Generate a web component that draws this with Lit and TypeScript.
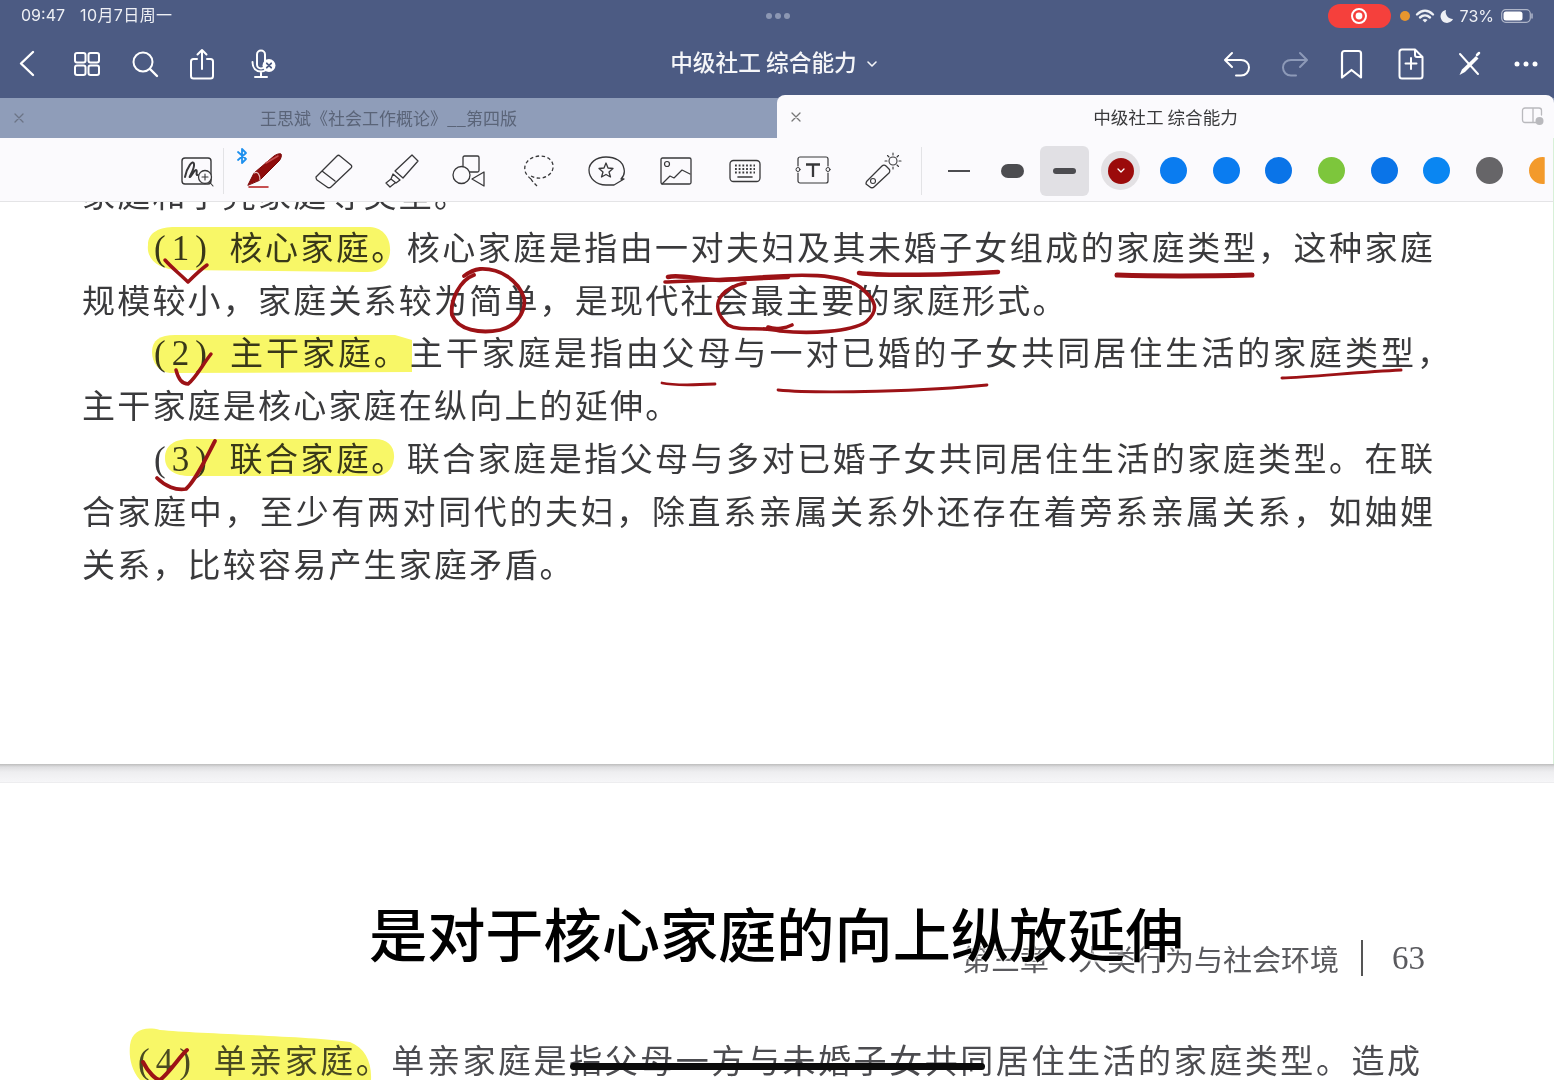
import { LitElement, html, css, svg } from "lit";
import { customElement } from "lit/decorators.js";

const ic = (w: number, h: number, body: unknown) => html`<svg width=${w} height=${h} viewBox="0 0 ${w} ${h}" fill="none" stroke="currentColor" stroke-linecap="round" stroke-linejoin="round">${body}</svg>`;

const colors = ["#0a7cf0", "#0a7cf0", "#0a74e8", "#7dc63c", "#0a74e8", "#0a86f2", "#666568"];

@customElement("app-root")
export class AppRoot extends LitElement {
  static styles = css`
    :host { display: block; width: 1554px; height: 1080px; position: relative; overflow: hidden; background: #fff;
      font-family: "Noto Sans CJK SC", "Noto Sans", sans-serif; color: #333; }
    .app { height: 1080px; display: flex; flex-direction: column; }
    .head { height: 98px; flex: none; background: #4c5b83; color: #fff; display: flex; flex-direction: column; }
    .status { height: 32px; display: grid; grid-template-columns: 1fr auto 1fr; align-items: center; padding: 0 20px 0 21px; font-family: "Inter", "Noto Sans CJK SC", sans-serif; font-size: 16px; line-height: 20px; color: #eef0f5; }
    .status .l { display: flex; gap: 14px; align-items: baseline; margin-top: -2px; }
    .status .l span + span { letter-spacing: .4px; margin-left: 1px; }
    .dots { display: flex; gap: 3px; }
    .dots i { width: 6px; height: 6px; border-radius: 50%; background: #8c97b3; }
    .status .r { display: flex; justify-content: flex-end; align-items: center; }
    .rec { width: 63px; height: 24px; border-radius: 12px; background: #f5403c; display: flex; align-items: center; justify-content: center; margin-right: 9px; }
    .odot { width: 10px; height: 10px; border-radius: 50%; background: #e8962e; margin-right: 5px; }
    .moon { display: flex; margin-left: 4px; }
    .pct { margin: 0 7px 0 5px; }
    .bar { flex: 1; display: grid; grid-template-columns: 1fr auto 1fr; align-items: center; padding: 0 16px 2px 16px; }
    .bl, .br { display: flex; align-items: center; }
    .bl { gap: 30px; }
    .br { justify-content: flex-end; gap: 33px; }
    .grid-ic { display: flex; margin-left: 5px; }
    .mic { display: flex; margin-left: 4px; }
    .undo { display: flex; margin-right: -3px; }
    .mark { display: flex; margin: 0 1px 0 -2px; }
    .title { font-size: 22.7px; font-weight: 500; display: flex; align-items: center; gap: 9px; color: #f4f5f8; margin-left: -6px; }
    .title span { line-height: 1; margin-top: -3px; }
    .dim { color: #8d9ab8; display: flex; }
    .tabs { height: 40px; flex: none; background: #8f9db9; position: relative; display: flex; }
    .tab-a { width: 777px; display: flex; align-items: center; justify-content: center; position: relative; color: #5a6478; font-size: 17px; }
    .tab-a > span:last-child { line-height: 1; margin-top: -1px; }
    .tab-b { flex: 1; margin-top: -3px; height: 43px; background: #fbfafd; border-radius: 8px 8px 0 0; display: flex; align-items: center; justify-content: center; position: relative; font-size: 17.6px; color: #3a3a3c; }
    .x { position: absolute; left: 13px; top: 50%; margin-top: -6px; color: #6c7486; display: flex; }
    .tab-b .x { color: #777; }
    .split { position: absolute; right: 9px; top: 12px; color: #b9b9bd; display: flex; }
    .tools { height: 64px; flex: none; background: #fbfafd; border-bottom: 1px solid #e4e4e6; border-right: 1px solid #d8f0d8; box-sizing: border-box; display: flex; align-items: center; padding: 2px 0 0 180px; color: #38383a; position: relative; overflow: hidden; }
    .tool { flex: none; display: flex; align-items: center; justify-content: center; }
    .sep { width: 1px; height: 48px; background: #e3e3e6; flex: none; }
    .sep.a { height: 46px; margin-left: -5px; margin-right: 20px; }
    .sep.b { margin-right: 11px; }
    .bt { position: absolute; left: 236px; top: 9px; color: #1e90ee; display: flex; }
    .w { flex: none; width: 52.7px; height: 50px; display: flex; align-items: center; justify-content: center; }
    .w.on { background: #e1e0e4; border-radius: 6px; width: 49px; margin: 0 5px 0 2px; }
    .ln { background: #4c4c50; }
    .ln.s { width: 22px; height: 2px; }
    .ln.m { width: 23px; height: 14px; border-radius: 7px; }
    .ln.t { width: 23px; height: 6px; border-radius: 3px; }
    .sw { flex: none; width: 27px; height: 27px; border-radius: 50%; }
    .sw.clip { clip-path: inset(0 11px 0 0); }
    .swc { flex: none; width: 52.7px; display: flex; justify-content: center; }
    .sel { width: 39px; height: 39px; border-radius: 50%; background: #e3e1e4; display: flex; align-items: center; justify-content: center; }
    .sel b { width: 26px; height: 26px; border-radius: 50%; background: #9b0a0a; display: flex; align-items: center; justify-content: center; color: #fff; }
    .doc { flex: 1; min-height: 0; background: #fff; overflow: hidden; display: flex; flex-direction: column; position: relative; }
    .page { background: #fff; flex: none; color: #3a3a3c; }
    .p1 { height: 562px; overflow: hidden; box-sizing: border-box; border-right: 1px solid #d8f0d8; }
    .gap { height: 19px; flex: none; box-sizing: border-box; border-bottom: 1px solid #ededef; background: linear-gradient(#bdbdbd 0, #dedee0 3px, #eeeef0 8px, #f6f6f8 100%); }
    .lines { margin-top: -35px; padding: 0 120px 0 82px; font-size: 33px; }
    .line { height: 52.8px; line-height: 52.8px; text-align: justify; text-align-last: justify; white-space: nowrap; }
    .line.ind { padding-left: 72px; }
    .line.hang { margin-right: -17px; }
    .line.short { text-align-last: left; letter-spacing: 2.2px; }
    .num { display: inline-block; width: 73px; font-family: "Liberation Serif", serif; font-size: 35px; letter-spacing: 6px; text-align-last: left; }
    .p2 { flex: 1; position: relative; font-weight: 400; color: #4c4c50; }
    .runhead { display: flex; justify-content: flex-end; align-items: center; height: 44px; margin-top: 153px; padding-right: 129px; font-size: 29px; gap: 22px; color: #5a5a5e; }
    .runhead .rule { width: 2px; height: 36px; background: #555; }
    .runhead .n { font-family: "Liberation Serif", serif; font-size: 33px; margin-left: 7px; }
    .l4 { margin-top: 53px; padding: 0 134px 0 138px; font-size: 33px; height: 52px; line-height: 52px; text-align-last: justify; white-space: nowrap; }
    .ink { position: absolute; left: 0; top: 0; pointer-events: none; }
    .hl { mix-blend-mode: multiply; }
    .cap { position: absolute; left: 369px; top: 890px; font-size: 58.2px; line-height: 84px; font-weight: 500; color: #000; white-space: nowrap; text-shadow: 0 2px 2px #fff, 0 -1px 2px #fff; }
    .home { position: absolute; left: 570px; top: 1063px; width: 415px; height: 7px; border-radius: 4px; background: #0b0b0b; }
  `;

  private tool(w: number, m: number, h: number, body: unknown) {
    return html`<div class="tool" style="width:${w}px;margin-right:${m}px">${ic(w, h, body)}</div>`;
  }

  render() {
    return html`
      <div class="app">
        <div class="head">
          <div class="status">
            <div class="l"><span>09:47</span><span>10月7日周一</span></div>
            <div class="dots"><i></i><i></i><i></i></div>
            <div class="r">
              <div class="rec">${ic(18, 18, svg`<circle cx="9" cy="9" r="7" stroke="#fff" stroke-width="2"/><circle cx="9" cy="9" r="3.4" fill="#fff" stroke="none"/>`)}</div>
              <i class="odot"></i>
              ${ic(20, 16, svg`<path d="M2 6.5C7 1.5 13 1.5 18 6.5M5 9.5C8 6.8 12 6.8 15 9.5" stroke-width="2.4"/><path d="M7.5 12L10 14.5L12.5 12C11 10.7 9 10.7 7.5 12Z" fill="currentColor" stroke="none"/>`)}
              <span class="moon">${ic(16, 16, svg`<path d="M7 2A6.5 6.5 0 1 0 14 11A7 7 0 0 1 7 2Z" fill="currentColor" stroke="none"/>`)}</span>
              <span class="pct">73%</span>
              ${ic(33, 16, svg`<rect x=".7" y="1.7" width="28.6" height="12.6" rx="4" stroke="#aeb5c8" stroke-width="1.2"/><rect x="2.5" y="3.5" width="19" height="9" rx="2.5" fill="#fff" stroke="none"/><path d="M31 6v4" stroke="#aeb5c8" stroke-width="1.5"/>`)}
            </div>
          </div>
          <div class="bar">
            <div class="bl">
              ${ic(22, 30, svg`<path d="M17 3 L5 14.5 L17 26" stroke-width="2.4"/>`)}
              <span class="grid-ic">${ic(28, 28, svg`<g stroke-width="2"><rect x="2" y="3" width="10.5" height="9.5" rx="2"/><rect x="15.5" y="3" width="10.5" height="9.5" rx="2"/><rect x="2" y="15.5" width="10.5" height="9.5" rx="2"/><rect x="15.5" y="15.5" width="10.5" height="9.5" rx="2"/></g>`)}</span>
              ${ic(28, 28, svg`<circle cx="12" cy="12" r="9.5" stroke-width="2"/><path d="M19 19L26 26" stroke-width="2.4"/>`)}
              ${ic(26, 32, svg`<path d="M8 11H4.5C3 11 2 12 2 13.5V28C2 29.5 3 30.5 4.5 30.5H21.5C23 30.5 24 29.5 24 28V13.5C24 12 23 11 21.5 11H18M13 21V2M8.5 6.5L13 2L17.5 6.5" stroke-width="2"/>`)}
              <span class="mic">${ic(28, 30, svg`<rect x="8" y="1.5" width="8" height="18" rx="4" stroke-width="2"/><path d="M3.5 13C3.5 19 7 22.5 12 22.5C14 22.5 15.5 22 17 21M12 22.5V27.5M6 28H18" stroke-width="2"/><circle cx="20" cy="16.5" r="6.5" fill="#fff" stroke="none"/><path d="M17.8 14.3L22.2 18.7M22.2 14.3L17.8 18.7" stroke="#4c5b83" stroke-width="1.8"/>`)}</span>
            </div>
            <div class="title"><span>中级社工 综合能力</span>${ic(12, 8, svg`<path d="M2 2L6 6L10 2" stroke-width="1.6"/>`)}</div>
            <div class="br">
              <span class="undo">${ic(28, 28, svg`<path d="M9 3L2 10L9 17M2.5 10H18C22.5 10 26 13 26 17.5C26 22 22.5 25.5 18 25.5H13" stroke-width="2"/>`)}</span>
              <span class="dim">${ic(28, 28, svg`<path d="M19 3L26 10L19 17M25.5 10H10C5.5 10 2 13 2 17.5C2 22 5.5 25.5 10 25.5H15" stroke-width="2"/>`)}</span>
              <span class="mark">${ic(24, 30, svg`<path d="M2 28.5V4.5C2 3 3 2 4.5 2H18.5C20 2 21 3 21 4.5V28.5L11.5 21Z" stroke-width="2.2"/>`)}</span>
              ${ic(26, 32, svg`<path d="M17 1.5H4C2.5 1.5 1.5 2.5 1.5 4V28C1.5 29.5 2.5 30.5 4 30.5H22C23.5 30.5 24.5 29.5 24.5 28V9ZM17 1.5V7C17 8.2 17.8 9 19 9H24.5M13 10V21M7.5 15.5H18.5" stroke-width="2"/>`)}
              ${ic(24, 26, svg`<path d="M3 3L21 23" stroke-width="2"/><path d="M19 5L21.5 7.5L8 21L2.5 24L5 18.5Z" fill="currentColor" stroke="none"/><path d="M20 4L22 2" stroke-width="2.5"/>`)}
              ${ic(24, 8, svg`<circle cx="3" cy="4" r="2.5" fill="currentColor" stroke="none"/><circle cx="12" cy="4" r="2.5" fill="currentColor" stroke="none"/><circle cx="21" cy="4" r="2.5" fill="currentColor" stroke="none"/>`)}
            </div>
          </div>
        </div>

        <div class="tabs">
          <div class="tab-a"><span class="x">${ic(12, 12, svg`<path d="M2 2L10 10M10 2L2 10" stroke-width="1.3"/>`)}</span><span>王思斌《社会工作概论》__第四版</span></div>
          <div class="tab-b"><span class="x">${ic(12, 12, svg`<path d="M2 2L10 10M10 2L2 10" stroke-width="1.3"/>`)}</span><span>中级社工 综合能力</span>
            <span class="split">${ic(24, 22, svg`<path d="M15 15.5H4C2.5 15.5 1.5 14.5 1.5 13V3.5C1.5 2 2.5 1 4 1H18C19.5 1 20.5 2 20.5 3.5V8M12 1V15" stroke-width="1.3"/><circle cx="18.5" cy="14" r="4" fill="#b9b9bd" stroke="none"/>`)}</span>
          </div>
        </div>

        <div class="tools">
          ${this.tool(34, 14, 32, svg`<rect x="2" y="3" width="29" height="26" rx="3" stroke-width="1.4"/><path d="M5 22C7 12 13 4 14 9C15 14 8 23 10 22C12 21 14 15 16 15C18 15 15 21 18 20" stroke-width="2"/><circle cx="25" cy="22" r="6.5" fill="#fbfafd" stroke-width="1.3"/><path d="M25 19V25M22 22H28M29.5 27L33 31" stroke-width="1.1"/>`)}
          <div class="sep a"></div>
          <span class="bt">${ic(12, 18, svg`<path d="M2 5L10 12L6 16V2L10 6L2 13" stroke-width="1.8"/>`)}</span>
          ${this.tool(42, 27, 40, svg`<path d="M4 34L10 22L30 5C32 3.5 36 2 37 3C38 4 37 8 35 10L16 29Z" fill="#8f0d0d" stroke="#7a0909" stroke-width="1"/><path d="M10 22C14 20 16 24 16 29" stroke="#e8c5c5" stroke-width="1.2"/><path d="M22 12L34 5" stroke="#c65050" stroke-width="1.5"/><path d="M5 36H24" stroke="#b51818" stroke-width="1.5"/>`)}
          ${this.tool(40, 28, 38, svg`<path d="M3 25L24 4C25 3 26 3 27 4L38 13C39 14 39 15 38 16L18 35C17 36 15 36 14 35L4 28C3 27 3 26 3 25ZM9 19L22 29" stroke-width="1.3"/>`)}
          ${this.tool(38, 32, 38, svg`<path d="M14 19L31 3L37 9L22 26ZM12 22L19 28L15 31L10 27ZM10 27L5 31L9 35L14 31" stroke-width="1.3"/>`)}
          ${this.tool(36, 35, 36, svg`<rect x="12" y="3" width="16" height="16" rx="1.5" stroke-width="1.3"/><circle cx="10.5" cy="22" r="8.5" fill="#fbfafd" stroke-width="1.3"/><path d="M33 19V33L21 26Z" stroke-width="1.3"/>`)}
          ${this.tool(34, 31, 36, svg`<path d="M9 26C4 22 2 18 3 13C5 6 12 3 18 3C26 3 32 8 31 15C30 22 22 26 15 25C13 25 11 24 9 23M9 26C10 28 12 30 15 33" stroke-width="1.3" stroke-dasharray="3.5 2.5" stroke-linecap="butt"/>`)}
          ${this.tool(39, 34, 32, svg`<path d="M34 24C37 21 38 18 37 14C36 6 28 2 19 2C9 2 2 8 2 15C2 23 9 30 19 30H27L37 24Z" stroke-width="1.3"/><path d="M19 8L21 13L26 13.5L22 17L23.5 22L19 19.5L14.5 22L16 17L12 13.5L17 13Z" stroke-width="1.3"/>`)}
          ${this.tool(32, 37, 28, svg`<rect x="1" y="1" width="30" height="26" rx="1.5" stroke-width="1.3"/><circle cx="7" cy="7" r="2.5" stroke-width="1.2"/><path d="M2 27L10 19L14 21L22 13L30 17" stroke-width="1.2"/>`)}
          ${this.tool(32, 34, 24, svg`<rect x="1" y="1.5" width="30" height="21" rx="3.5" stroke-width="1.3"/><path d="M6 6.5H26M6 10H26M6 13.5H26" stroke-width="2" stroke-dasharray="1.8 1.9" stroke-linecap="butt"/><path d="M9 18H23" stroke-width="1.6"/>`)}
          ${this.tool(36, 33, 30, svg`<path d="M3 10V3C3 2 4 1 5 1H31C32 1 33 2 33 3V10M33 17V25C33 26 32 27 31 27H5C4 27 3 26 3 25V17" stroke-width="1.2"/><circle cx="3" cy="13.5" r="2" stroke-width="1"/><circle cx="33" cy="13.5" r="2" stroke-width="1"/><path d="M11 8.5H25M18 8.5V21" stroke-width="2.3" stroke-linecap="butt"/>`)}
          ${this.tool(38, 19, 38, svg`<path d="M3 30L18 15C19 14 21 14 22 15L25 18C26 19 26 21 25 22L10 36C9 37 7 37 6 36L2 33C2 32 2 31 3 30Z" stroke-width="1.3" transform="translate(0,-1)"/><circle cx="9" cy="29" r="2.5" stroke-width="1.1"/><circle cx="29" cy="9" r="4" stroke-width="1.1"/><path d="M29 1V3M29 15V17M21 9H23M35 9H37M23.5 3.5L25 5M33 13L34.5 14.5M34.5 3.5L33 5" stroke-width="1.1"/>`)}
          <div class="sep b"></div>
          <div class="w"><div class="ln s"></div></div>
          <div class="w"><div class="ln m"></div></div>
          <div class="w on"><div class="ln t"></div></div>
          <div class="swc"><div class="sel"><b>${ic(10, 8, svg`<path d="M2 2L5 5L8 2" stroke-width="1.3"/>`)}</b></div></div>
          ${colors.map((c) => html`<div class="swc"><div class="sw" style="background:${c}"></div></div>`)}
          <div class="swc"><div class="sw clip" style="background:#f39a2b"></div></div>
        </div>

        <div class="doc">
          <div class="page p1">
            <div class="lines">
              <div class="line short">家庭和子壳家庭等类型。</div>
              <div class="line ind"><span class="num">(1)</span>核心家庭。核心家庭是指由一对夫妇及其未婚子女组成的家庭类型，这种家庭</div>
              <div class="line short">规模较小，家庭关系较为简单，是现代社会最主要的家庭形式。</div>
              <div class="line ind hang"><span class="num">(2)</span>主干家庭。主干家庭是指由父母与一对已婚的子女共同居住生活的家庭类型，</div>
              <div class="line short">主干家庭是核心家庭在纵向上的延伸。</div>
              <div class="line ind"><span class="num">(3)</span>联合家庭。联合家庭是指父母与多对已婚子女共同居住生活的家庭类型。在联</div>
              <div class="line">合家庭中，至少有两对同代的夫妇，除直系亲属关系外还存在着旁系亲属关系，如妯娌</div>
              <div class="line short">关系，比较容易产生家庭矛盾。</div>
            </div>
          </div>
          <div class="gap"></div>
          <div class="page p2">
            <div class="runhead"><span>第三章　人类行为与社会环境</span><span class="rule"></span><span class="n">63</span></div>
            <div class="l4"><span class="num">(4)</span>单亲家庭。单亲家庭是指父母一方与未婚子女共同居住生活的家庭类型。造成</div>
          </div>
        </div>
      </div>

      <svg class="ink hl" width="1554" height="1080" fill="#f8f767" stroke="none">
        <path d="M148 245C148 232 160 227 175 227H370C385 228 391 240 390 252C389 266 378 273 365 272L180 270C160 270 146 260 148 245Z"/>
        <path d="M152 352C152 340 160 335 175 335H395L412 340V372L170 373C158 372 152 362 152 352Z"/>
        <path d="M165 458C165 445 175 439 190 439H375C388 439 395 447 394 458C393 470 385 476 375 476H190C175 476 165 470 165 458Z"/>
        <path d="M130 1045C132 1030 145 1026 160 1030C200 1034 310 1036 350 1042C365 1048 372 1062 371 1080H140C130 1068 129 1055 130 1045Z"/>
      </svg>
      <svg class="ink" width="1554" height="1080" fill="none" stroke="#9c1216" stroke-width="3.5" stroke-linecap="round" stroke-linejoin="round">
        <path d="M165 260C172 268 180 274 188 282C194 276 200 270 207 265"/>
        <path d="M176 370C178 378 182 384 188 384C196 378 203 364 211 354"/>
        <path d="M157 478C165 486 176 491 186 489C196 480 206 458 215 441" stroke-width="3.8"/>
        <path d="M143 1062C148 1072 156 1080 160 1080C170 1072 180 1056 187 1050" stroke-width="4"/>
        <path d="M474 275C460 280 450 300 452 315C458 330 480 334 500 330C518 326 526 310 524 298C518 280 500 268 480 269C472 270 468 273 464 276" stroke-width="3.8"/>
        <path d="M668 277C680 274 700 280 720 280C740 279 760 278 788 277" stroke-width="4.5"/>
        <path d="M665 282C680 281 710 281 760 277C800 274 840 273 860 287C876 300 880 310 866 322C850 332 810 334 780 331C760 326 740 332 728 325C718 316 714 305 722 295C728 288 735 285 745 283M768 327C776 330 786 328 792 325" stroke-width="3.6"/>
        <path d="M859 273C880 276 950 275 998 272" stroke-width="4.5"/>
        <path d="M1117 275C1150 276 1210 276 1252 275" stroke-width="5"/>
        <path d="M662 383C675 386 695 385 715 384" stroke-width="2.8"/>
        <path d="M778 390C820 394 930 391 987 385" stroke-width="2.8"/>
        <path d="M1282 378C1310 377 1360 372 1401 370" stroke-width="3"/>
      </svg>
      <div class="cap">是对于核心家庭的向上纵放延伸</div>
      <div class="home"></div>
    `;
  }
}
